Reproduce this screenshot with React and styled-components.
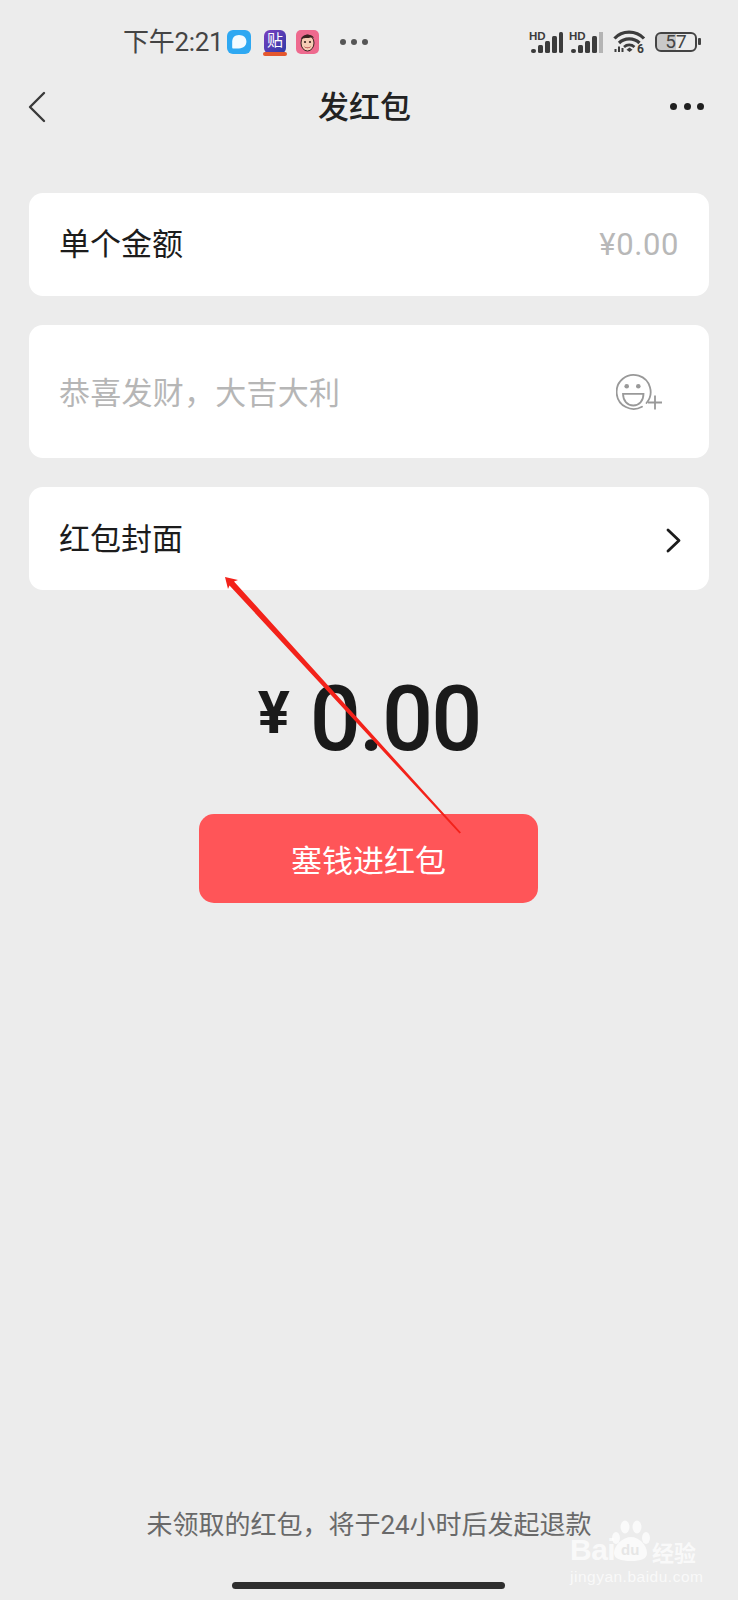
import React from "react";
import styled, { createGlobalStyle } from "styled-components";

const Global = createGlobalStyle`
  html, body { margin: 0; padding: 0; background: #ececec; }
  * { box-sizing: border-box; }
`;
const stack = `Roboto, "Noto Sans CJK SC", sans-serif`;

const Page = styled.div`
  position: relative; width: 738px; height: 1600px; overflow: hidden;
  display: flex; flex-direction: column; background: #ececec;
  font-family: ${stack}; color: #1c1c1c;
`;
const StatusBar = styled.div`
  height: 84px; display: flex; align-items: center; padding: 0 41px 0 123px;
`;
const Time = styled.span`
  font-size: 26px; line-height: 30px; color: #444; margin-right: 8px; width: 96px; white-space: nowrap; letter-spacing: -0.3px;
`;
const NotifyIcons = styled.div`display: flex; align-items: center; gap: 11px;`;
const Dots = styled.div`display: flex; gap: ${p => p.$gap}px; margin-left: ${p => p.$left || 0}px;`;
const Dot = styled.i`
  display: block; width: ${p => p.$size}px; height: ${p => p.$size}px; border-radius: 50%; background: ${p => p.$color};
`;
const StatusRight = styled.div`display: flex; align-items: center; margin-left: auto;`;
const Sig = styled.div`position: relative; width: 34px; height: 24px; margin-right: ${p => p.$gap}px;`;
const HD = styled.span`
  position: absolute; left: 0; top: 1px; font: bold 11.5px/11px "Liberation Sans", sans-serif; color: #3c3c3c;
`;
const Battery = styled.div`
  position: relative; width: 42px; height: 20px; margin-left: 9px; border: 2px solid #444; border-radius: 6px;
  display: flex; align-items: center; justify-content: center; font-size: 19px; line-height: 20px; color: #444;
  background: linear-gradient(90deg, #c9c9c9 0 50%, transparent 50%);
  background-clip: padding-box;
  &::after { content: ""; position: absolute; right: -6px; top: 4px; width: 3px; height: 7px; background: #444; border-radius: 1px; }
`;
const NavBar = styled.div`
  height: 44px; display: flex; align-items: center; justify-content: space-between; padding: 0 34px 0 27px; position: relative;
`;
const Title = styled.h1`
  position: absolute; left: 318px; top: 2px; margin: 0; font-size: 31px; line-height: 44px; font-weight: 500; color: #222;
`;
const BackIcon = styled.svg`margin-top: 2px;`;
const Cards = styled.div`
  display: flex; flex-direction: column; gap: 29px; margin: 0 29px 0 29px; padding-top: 65px;
`;
const Card = styled.div`
  height: ${p => p.$h}px; background: #fff; border-radius: 14px; display: flex; align-items: center; justify-content: space-between;
  padding: 0 ${p => p.$right}px 0 30px;
`;
const Label = styled.span`
  font-size: 31px; line-height: 40px; color: ${p => p.$muted ? "#b6b6b6" : "#1c1c1c"};
  margin-top: ${p => p.$nudge || 0}px; letter-spacing: ${p => p.$muted ? "0.25px" : "0"};
`;
const Value = styled.span`font-size: 31px; line-height: 40px; color: #b8b8b8; letter-spacing: 0.6px;`;
const ChevronIcon = styled.svg`margin-top: 3px;`;
const AmountRow = styled.div`
  display: flex; justify-content: center; gap: 20px; margin-top: 80px; height: 100px; color: #1a1a1a;
`;
const Yen = styled.span`font-size: 60px; line-height: 76px; font-weight: 700; margin-top: 5px;`;
const Amount = styled.span`font-size: 90px; line-height: 100px; font-weight: 500; letter-spacing: -2px;`;
const Button = styled.button`
  display: block; width: 339px; height: 89px; margin: 44px 0 0 199px; border: 0; border-radius: 15px; background: #ff5558;
  color: #fff; font-family: ${stack}; font-size: 31px; letter-spacing: 0;
`;
const Footer = styled.div`
  margin-top: auto; padding-bottom: 57px; text-align: center; font-size: 26px; line-height: 36px; color: #696969;
`;
const HomeBar = styled.div`
  position: absolute; left: 232px; bottom: 11px; width: 273px; height: 7px; border-radius: 4px; background: #2e2e2e;
`;
const Arrow = styled.svg`position: absolute; left: 0; top: 0; pointer-events: none;`;
const Watermark = styled.div`
  position: absolute; left: 570px; top: 1519px; width: 130px; color: rgba(255,255,255,.72); font-family: "Liberation Sans", sans-serif;
`;
const BrandRow = styled.div`display: flex; align-items: flex-end; height: 44px;`;
const Bai = styled.span`font-size: 30px; line-height: 30px; font-weight: 700; width: 41px; letter-spacing: -0.5px; margin-bottom: -2px;`;
const Jingyan = styled.span`
  font: 700 22px/24px "Noto Sans CJK SC", sans-serif; margin-left: 1px; white-space: nowrap;
`;
const Domain = styled.div`
  margin-top: 6px; font-size: 15.5px; line-height: 16px; white-space: nowrap; letter-spacing: 0.5px;
`;
const PawLetters = styled.text`
  font: 700 15px "Liberation Sans", sans-serif; fill: #e6e6e6;
`;
const TieIcon = styled.div`
  position: relative; width: 22px; height: 24px; margin: 0 -1px 0 2px; border-radius: 6px; background: linear-gradient(135deg, #7a3fc0, #2c3aa6);
  color: #fff; font-size: 16px; line-height: 22px; text-align: center;
  &::after { content: ""; position: absolute; left: -1px; right: -1px; bottom: -2px; height: 4px; border-radius: 2px; background: #e4572e; }
`;

export default function App() {
  return (
    <Page>
      <Global />
      <StatusBar>
        <Time>下午2:21</Time>
        <NotifyIcons>
          <svg width="24" height="24" viewBox="0 0 24 24">
            <rect width="24" height="24" rx="6" fill="#2ea8f2" />
            <path d="M12 5c4.400 0 7.400 2.800 7.400 6.600 0 3.900-3 6.900-7.400 6.900H6.400c-.9 0-1.200-.6-1.200-1.300V11.600C5.200 7.800 7.700 5 12 5z" fill="#f4fbff" />
          </svg>
          <TieIcon>贴</TieIcon>
          <svg width="23" height="24" viewBox="0 0 23 24">
            <rect width="23" height="24" rx="5" fill="#ee6a8e" />
            <ellipse cx="11.500" cy="13" rx="6.500" ry="8" fill="#f6cdb4" stroke="#3a2320" strokeWidth="1" />
            <path d="M5 9c1-5 11-6 13-1-3-1-4 0-6.500 0S7 8 5 9z" fill="#3a2320" />
            <circle cx="9" cy="12" r="1.100" fill="#3a2320" />
            <circle cx="14" cy="12" r="1.100" fill="#3a2320" />
            <path d="M8 16c2 2 5 2 7 0-1 3-6 3-7 0z" fill="#a3272d" />
          </svg>
        </NotifyIcons>
        <Dots $gap={5} $left={21}>
          <Dot $size={6} $color="#555" /><Dot $size={6} $color="#555" /><Dot $size={6} $color="#555" />
        </Dots>
        <StatusRight>
          <Sig $gap={6}>
            <HD>HD</HD>
            <svg width="34" height="24" viewBox="0 0 34 24">
              <g fill="#3c3c3c">
                <rect x="2" y="19" width="5" height="4" rx="2" /><rect x="9" y="15" width="5" height="8" rx="1.500" />
                <rect x="16" y="11" width="5" height="12" rx="1.500" /><rect x="23" y="6" width="5" height="17" rx="1.500" />
                <rect x="30" y="2" width="4" height="21" rx="1.500" />
              </g>
            </svg>
          </Sig>
          <Sig $gap={10}>
            <HD>HD</HD>
            <svg width="34" height="24" viewBox="0 0 34 24">
              <g fill="#3c3c3c">
                <rect x="2" y="19" width="5" height="4" rx="2" /><rect x="9" y="15" width="5" height="8" rx="1.500" />
                <rect x="16" y="11" width="5" height="12" rx="1.500" /><rect x="23" y="6" width="5" height="17" rx="1.500" />
              </g>
              <rect x="30" y="2" width="4" height="21" fill="#b4b4b4" />
            </svg>
          </Sig>
          <svg width="33" height="26" viewBox="0 0 33 26" fill="none" stroke="#3c3c3c" strokeWidth="3.200">
            <path d="M1.500 9.500C9 1 23 1 31 9.500" />
            <path d="M6 14c5.500-5.500 15-5.500 20.500 0" />
            <path d="M11 18c3-2.800 7.500-2.800 10.500 0" strokeWidth="2.600" />
            <path d="M13.500 20.800l3-2.300 3 2.300-3 2.200z" fill="#3c3c3c" stroke="none" />
            <path d="M2.500 20v3M6 17.500V23M9.500 19v4" strokeWidth="2" />
            <text x="24" y="23.500" fontFamily="Roboto, sans-serif" fontSize="12" fontWeight="700" fill="#3c3c3c" stroke="none">6</text>
          </svg>
          <Battery>57</Battery>
        </StatusRight>
      </StatusBar>
      <NavBar>
        <BackIcon width="19" height="32" viewBox="0 0 19 32" fill="none" stroke="#3a3a3a" strokeWidth="2.400" strokeLinecap="round" strokeLinejoin="round">
          <path d="M17 2 3 16l14 14" />
        </BackIcon>
        <Title>发红包</Title>
        <Dots $gap={6.5}>
          <Dot $size={7} $color="#1f1f1f" /><Dot $size={7} $color="#1f1f1f" /><Dot $size={7} $color="#1f1f1f" />
        </Dots>
      </NavBar>
      <Cards>
        <Card $h={103} $right={30}>
          <Label>单个金额</Label>
          <Value>¥0.00</Value>
        </Card>
        <Card $h={133} $right={45}>
          <Label $muted $nudge={5}>恭喜发财，大吉大利</Label>
          <svg width="48" height="38" viewBox="0 0 48 38" fill="none" stroke="#999" strokeWidth="1.800">
            <path d="M30.500 30A17 17 0 1 0 26 33.700" strokeLinecap="round" />
            <circle cx="10.700" cy="13.200" r="2.300" fill="#999" stroke="none" />
            <circle cx="22.300" cy="13.200" r="2.300" fill="#999" stroke="none" />
            <path d="M7 20.800h20.500c0 7.200-4.500 11.700-10.200 11.700S7 28 7 20.800z" />
            <path d="M32 29.500h14M39 22.500v14" />
          </svg>
        </Card>
        <Card $h={103} $right={28}>
          <Label $nudge={3}>红包封面</Label>
          <ChevronIcon width="15" height="25" viewBox="0 0 15 25" fill="none" stroke="#1c1c1c" strokeWidth="2.800" strokeLinecap="round" strokeLinejoin="round">
            <path d="M2 2l11 10.500L2 23" />
          </ChevronIcon>
        </Card>
      </Cards>
      <AmountRow>
        <Yen>¥</Yen>
        <Amount>0.00</Amount>
      </AmountRow>
      <Button>塞钱进红包</Button>
      <Footer>未领取的红包，将于24小时后发起退款</Footer>
      <HomeBar />
      <Arrow width="738" height="1600" viewBox="0 0 738 1600">
        <path d="M225 577 L238 580 L234 581.500 L461 832.500 L459.500 833.500 L229.500 585.500 L228 589 Z" fill="#f3221a" />
      </Arrow>
      <Watermark>
        <BrandRow>
          <Bai>Bai</Bai>
          <svg width="40" height="44" viewBox="0 0 40 44" fill="rgba(255,255,255,.72)">
            <ellipse cx="5" cy="19" rx="4" ry="6" />
            <ellipse cx="14" cy="8" rx="4.500" ry="6.500" />
            <ellipse cx="26" cy="8" rx="4.500" ry="6.500" />
            <ellipse cx="35" cy="19" rx="4" ry="6" />
            <path d="M20 18c8 0 16 8 16 16 0 6-6 8-16 8S3 40 3 34c0-8 9-16 17-16z" />
            <PawLetters x="10" y="36">du</PawLetters>
          </svg>
          <Jingyan>经验</Jingyan>
        </BrandRow>
        <Domain>jingyan.baidu.com</Domain>
      </Watermark>
    </Page>
  );
}
